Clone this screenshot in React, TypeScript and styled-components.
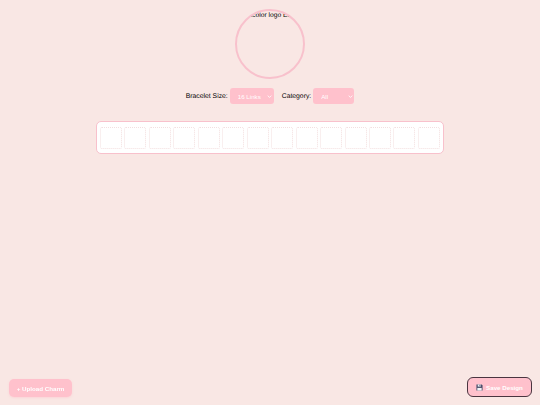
import * as React from "react";
import styled, { createGlobalStyle } from "styled-components";

const SLOT_COUNT = 14;

const GlobalStyle = createGlobalStyle`
  html, body {
    margin: 0;
    padding: 0;
    height: 100%;
    background-color: #f9e7e4;
    font-family: "Liberation Sans", Arial, sans-serif;
    text-rendering: geometricPrecision;
  }
`;

const Chevron = () => (
  <ChevronIcon viewBox="0 0 8 5">
    <path d="M1 1l3 3 3-3" fill="none" stroke="#fff" strokeWidth="1.4" />
  </ChevronIcon>
);

const App = () => {
  return (
    <Page>
      <GlobalStyle />
      <LogoCircle>
        <LogoAlt>Multicolor logo Etsy shop</LogoAlt>
      </LogoCircle>
      <Controls>
        <Label>Bracelet Size:</Label>
        <SelectWrap>
          <Select defaultValue="16" $width={44}>
            <option value="16">16 Links</option>
          </Select>
          <Chevron />
        </SelectWrap>
        <Label $spaced>Category:</Label>
        <SelectWrap>
          <Select defaultValue="all" $width={41}>
            <option value="all">All</option>
          </Select>
          <Chevron />
        </SelectWrap>
      </Controls>
      <Bracelet>
        {Array.from({ length: SLOT_COUNT }).map((_, i) => (
          <Slot key={i} />
        ))}
      </Bracelet>
      <UploadButton>+ Upload Charm</UploadButton>
      <SaveButton>
        <SaveIcon viewBox="0 0 16 16">
          <path d="M1 1h12l2 2v12H1z" fill="#4a4f6a" />
          <rect x="4" y="1" width="7" height="5" fill="#e8ecf2" />
          <rect x="8" y="2" width="2" height="3" fill="#4a4f6a" />
          <rect x="3" y="9" width="10" height="6" fill="#f4f4f6" />
        </SaveIcon>
        Save Design
      </SaveButton>
    </Page>
  );
};

export default App;

const Page = styled.div`
  display: flex;
  flex-direction: column;
  align-items: center;
  min-height: 405px;
  padding-top: 9px;
  box-sizing: border-box;
`;

const LogoCircle = styled.div`
  width: 70px;
  height: 70px;
  box-sizing: border-box;
  border: 2px solid #f8c1cc;
  border-radius: 50%;
  overflow: hidden;
  display: flex;
  justify-content: flex-start;
`;

const LogoAlt = styled.span`
  flex: none;
  font-size: 6.7px;
  line-height: 8px;
  margin-top: 1px;
  margin-left: 1px;
  color: #000;
  white-space: nowrap;
`;

const Controls = styled.div`
  display: flex;
  align-items: center;
  height: 16px;
  margin-top: 9px;
`;

const Label = styled.span<{ $spaced?: boolean }>`
  font-size: 6.8px;
  color: #000;
  margin-left: ${(p) => (p.$spaced ? "8px" : "0")};
  margin-right: 2px;
`;

const SelectWrap = styled.div`
  position: relative;
  display: flex;
`;

const Select = styled.select<{ $width: number }>`
  appearance: none;
  width: ${(p) => p.$width}px;
  height: 16px;
  padding: 0 0 0 8px;
  border: none;
  border-radius: 3px;
  background-color: #ffc1cc;
  color: #fff;
  font-family: "Liberation Sans", Arial, sans-serif;
  font-size: 6.2px;
`;

const ChevronIcon = styled.svg`
  position: absolute;
  right: 1.5px;
  top: 7px;
  width: 5px;
  height: 3px;
  pointer-events: none;
`;

const Bracelet = styled.div`
  display: flex;
  justify-content: space-between;
  align-items: center;
  width: 348px;
  height: 33px;
  margin-top: 17px;
  padding: 0 3px;
  box-sizing: border-box;
  background-color: #fff;
  border: 1px solid #f8c1cc;
  border-radius: 5px;
`;

const Slot = styled.div`
  width: 22px;
  height: 22px;
  box-sizing: border-box;
  border: 1px dotted #f3dfe0;
  border-radius: 2px;
  background-color: #fff;
`;

const UploadButton = styled.button`
  position: fixed;
  left: 9px;
  bottom: 8px;
  width: 63px;
  height: 18px;
  padding: 0;
  border: none;
  border-radius: 5px;
  background-color: #ffc1cc;
  color: #fff;
  font-family: "Liberation Sans", Arial, sans-serif;
  font-size: 6.2px;
  font-weight: 700;
  white-space: nowrap;
  box-shadow: 0 1px 2px rgba(255, 193, 204, 0.5);
`;

const SaveButton = styled.button`
  position: fixed;
  right: 8px;
  bottom: 8px;
  width: 65px;
  height: 20px;
  padding: 0;
  display: flex;
  align-items: center;
  justify-content: center;
  gap: 3px;
  border: 1px solid #4a3540;
  border-radius: 6px;
  background-color: #ffc1cc;
  color: #fff;
  font-family: "Liberation Sans", Arial, sans-serif;
  font-size: 6.2px;
  font-weight: 700;
  white-space: nowrap;
`;

const SaveIcon = styled.svg`
  width: 7px;
  height: 7px;
  flex: none;
`;
